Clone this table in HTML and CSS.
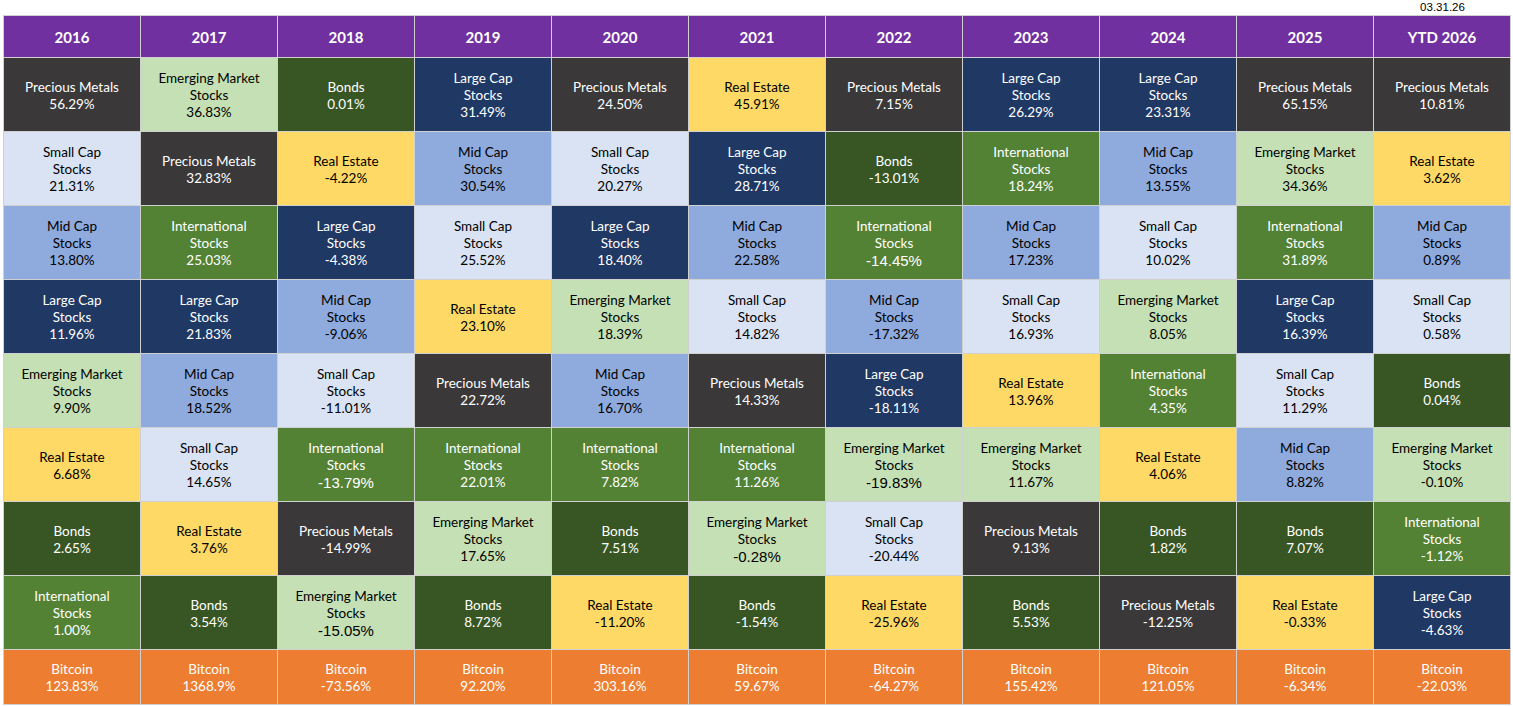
FILE: index.html
```html
<!DOCTYPE html>
<html lang="en">
<head>
<meta charset="utf-8">
<title>Asset Class Returns</title>
<link rel="stylesheet" href="styles.css">
</head>
<body>
<div class="page">
  <div class="date-row"><span class="date">03.31.26</span></div>
  <div class="grid">
    <div class="hd">2016</div><div class="hd">2017</div><div class="hd">2018</div><div class="hd">2019</div><div class="hd">2020</div><div class="hd">2021</div><div class="hd">2022</div><div class="hd">2023</div><div class="hd">2024</div><div class="hd">2025</div><div class="hd">YTD 2026</div>

    <div class="cell pm"><span>Precious Metals</span><span>56.29%</span></div>
    <div class="cell em"><span>Emerging Market<br>Stocks</span><span>36.83%</span></div>
    <div class="cell bd"><span>Bonds</span><span>0.01%</span></div>
    <div class="cell lc"><span>Large Cap<br>Stocks</span><span>31.49%</span></div>
    <div class="cell pm"><span>Precious Metals</span><span>24.50%</span></div>
    <div class="cell re"><span>Real Estate</span><span>45.91%</span></div>
    <div class="cell pm"><span>Precious Metals</span><span>7.15%</span></div>
    <div class="cell lc"><span>Large Cap<br>Stocks</span><span>26.29%</span></div>
    <div class="cell lc"><span>Large Cap<br>Stocks</span><span>23.31%</span></div>
    <div class="cell pm"><span>Precious Metals</span><span>65.15%</span></div>
    <div class="cell pm"><span>Precious Metals</span><span>10.81%</span></div>

    <div class="cell sc"><span>Small Cap<br>Stocks</span><span>21.31%</span></div>
    <div class="cell pm"><span>Precious Metals</span><span>32.83%</span></div>
    <div class="cell re"><span>Real Estate</span><span>-4.22%</span></div>
    <div class="cell mc"><span>Mid Cap<br>Stocks</span><span>30.54%</span></div>
    <div class="cell sc"><span>Small Cap<br>Stocks</span><span>20.27%</span></div>
    <div class="cell lc"><span>Large Cap<br>Stocks</span><span>28.71%</span></div>
    <div class="cell bd"><span>Bonds</span><span>-13.01%</span></div>
    <div class="cell in"><span>International<br>Stocks</span><span>18.24%</span></div>
    <div class="cell mc"><span>Mid Cap<br>Stocks</span><span>13.55%</span></div>
    <div class="cell em"><span>Emerging Market<br>Stocks</span><span>34.36%</span></div>
    <div class="cell re"><span>Real Estate</span><span>3.62%</span></div>

    <div class="cell mc"><span>Mid Cap<br>Stocks</span><span>13.80%</span></div>
    <div class="cell in"><span>International<br>Stocks</span><span>25.03%</span></div>
    <div class="cell lc"><span>Large Cap<br>Stocks</span><span>-4.38%</span></div>
    <div class="cell sc"><span>Small Cap<br>Stocks</span><span>25.52%</span></div>
    <div class="cell lc"><span>Large Cap<br>Stocks</span><span>18.40%</span></div>
    <div class="cell mc"><span>Mid Cap<br>Stocks</span><span>22.58%</span></div>
    <div class="cell in"><span>International<br>Stocks</span><span class="big">-14.45%</span></div>
    <div class="cell mc"><span>Mid Cap<br>Stocks</span><span>17.23%</span></div>
    <div class="cell sc"><span>Small Cap<br>Stocks</span><span>10.02%</span></div>
    <div class="cell in"><span>International<br>Stocks</span><span>31.89%</span></div>
    <div class="cell mc"><span>Mid Cap<br>Stocks</span><span>0.89%</span></div>

    <div class="cell lc"><span>Large Cap<br>Stocks</span><span>11.96%</span></div>
    <div class="cell lc"><span>Large Cap<br>Stocks</span><span>21.83%</span></div>
    <div class="cell mc"><span>Mid Cap<br>Stocks</span><span>-9.06%</span></div>
    <div class="cell re"><span>Real Estate</span><span>23.10%</span></div>
    <div class="cell em"><span>Emerging Market<br>Stocks</span><span>18.39%</span></div>
    <div class="cell sc"><span>Small Cap<br>Stocks</span><span>14.82%</span></div>
    <div class="cell mc"><span>Mid Cap<br>Stocks</span><span>-17.32%</span></div>
    <div class="cell sc"><span>Small Cap<br>Stocks</span><span>16.93%</span></div>
    <div class="cell em"><span>Emerging Market<br>Stocks</span><span>8.05%</span></div>
    <div class="cell lc"><span>Large Cap<br>Stocks</span><span>16.39%</span></div>
    <div class="cell sc"><span>Small Cap<br>Stocks</span><span>0.58%</span></div>

    <div class="cell em"><span>Emerging Market<br>Stocks</span><span>9.90%</span></div>
    <div class="cell mc"><span>Mid Cap<br>Stocks</span><span>18.52%</span></div>
    <div class="cell sc"><span>Small Cap<br>Stocks</span><span>-11.01%</span></div>
    <div class="cell pm"><span>Precious Metals</span><span>22.72%</span></div>
    <div class="cell mc"><span>Mid Cap<br>Stocks</span><span>16.70%</span></div>
    <div class="cell pm"><span>Precious Metals</span><span>14.33%</span></div>
    <div class="cell lc"><span>Large Cap<br>Stocks</span><span>-18.11%</span></div>
    <div class="cell re"><span>Real Estate</span><span>13.96%</span></div>
    <div class="cell in"><span>International<br>Stocks</span><span>4.35%</span></div>
    <div class="cell sc"><span>Small Cap<br>Stocks</span><span>11.29%</span></div>
    <div class="cell bd"><span>Bonds</span><span>0.04%</span></div>

    <div class="cell re"><span>Real Estate</span><span>6.68%</span></div>
    <div class="cell sc"><span>Small Cap<br>Stocks</span><span>14.65%</span></div>
    <div class="cell in"><span>International<br>Stocks</span><span class="big">-13.79%</span></div>
    <div class="cell in"><span>International<br>Stocks</span><span>22.01%</span></div>
    <div class="cell in"><span>International<br>Stocks</span><span>7.82%</span></div>
    <div class="cell in"><span>International<br>Stocks</span><span>11.26%</span></div>
    <div class="cell em"><span>Emerging Market<br>Stocks</span><span class="big">-19.83%</span></div>
    <div class="cell em"><span>Emerging Market<br>Stocks</span><span>11.67%</span></div>
    <div class="cell re"><span>Real Estate</span><span>4.06%</span></div>
    <div class="cell mc"><span>Mid Cap<br>Stocks</span><span>8.82%</span></div>
    <div class="cell em"><span>Emerging Market<br>Stocks</span><span>-0.10%</span></div>

    <div class="cell bd"><span>Bonds</span><span>2.65%</span></div>
    <div class="cell re"><span>Real Estate</span><span>3.76%</span></div>
    <div class="cell pm"><span>Precious Metals</span><span>-14.99%</span></div>
    <div class="cell em"><span>Emerging Market<br>Stocks</span><span>17.65%</span></div>
    <div class="cell bd"><span>Bonds</span><span>7.51%</span></div>
    <div class="cell em"><span>Emerging Market<br>Stocks</span><span class="big">-0.28%</span></div>
    <div class="cell sc"><span>Small Cap<br>Stocks</span><span>-20.44%</span></div>
    <div class="cell pm"><span>Precious Metals</span><span>9.13%</span></div>
    <div class="cell bd"><span>Bonds</span><span>1.82%</span></div>
    <div class="cell bd"><span>Bonds</span><span>7.07%</span></div>
    <div class="cell in"><span>International<br>Stocks</span><span>-1.12%</span></div>

    <div class="cell in"><span>International<br>Stocks</span><span>1.00%</span></div>
    <div class="cell bd"><span>Bonds</span><span>3.54%</span></div>
    <div class="cell em"><span>Emerging Market<br>Stocks</span><span class="big">-15.05%</span></div>
    <div class="cell bd"><span>Bonds</span><span>8.72%</span></div>
    <div class="cell re"><span>Real Estate</span><span>-11.20%</span></div>
    <div class="cell bd"><span>Bonds</span><span>-1.54%</span></div>
    <div class="cell re"><span>Real Estate</span><span>-25.96%</span></div>
    <div class="cell bd"><span>Bonds</span><span>5.53%</span></div>
    <div class="cell pm"><span>Precious Metals</span><span>-12.25%</span></div>
    <div class="cell re"><span>Real Estate</span><span>-0.33%</span></div>
    <div class="cell lc"><span>Large Cap<br>Stocks</span><span>-4.63%</span></div>

    <div class="cell bt"><span>Bitcoin</span><span>123.83%</span></div>
    <div class="cell bt"><span>Bitcoin</span><span>1368.9%</span></div>
    <div class="cell bt"><span>Bitcoin</span><span>-73.56%</span></div>
    <div class="cell bt"><span>Bitcoin</span><span>92.20%</span></div>
    <div class="cell bt"><span>Bitcoin</span><span>303.16%</span></div>
    <div class="cell bt"><span>Bitcoin</span><span>59.67%</span></div>
    <div class="cell bt"><span>Bitcoin</span><span>-64.27%</span></div>
    <div class="cell bt"><span>Bitcoin</span><span>155.42%</span></div>
    <div class="cell bt"><span>Bitcoin</span><span>121.05%</span></div>
    <div class="cell bt"><span>Bitcoin</span><span>-6.34%</span></div>
    <div class="cell bt"><span>Bitcoin</span><span>-22.03%</span></div>
  </div>
</div>
</body>
</html>
```
FILE: styles.css
```css
html, body {
  margin: 0;
  padding: 0;
  background: #ffffff;
}
.page {
  padding-left: 3px;
  font-family: Lato, "Open Sans", sans-serif;
}
.date-row {
  width: 1508px;
  height: 15px;
  display: flex;
  justify-content: flex-end;
}
.date {
  width: 137px;
  text-align: center;
  font-family: "Liberation Sans", Arial, sans-serif;
  font-size: 11.5px;
  line-height: 14px;
  color: #000;
}
.grid {
  display: grid;
  grid-template-columns: repeat(11, 136px);
  grid-template-rows: 41px repeat(8, 73px) 54px;
  gap: 1px;
  background: #d0d0d0;
  border: 1px solid #d0d0d0;
  width: max-content;
}
.hd {
  background: #7030a0;
  color: #fff;
  font-weight: 700;
  font-size: 15px;
  display: flex;
  align-items: center;
  justify-content: center;
}
.cell {
  display: flex;
  flex-direction: column;
  align-items: center;
  justify-content: center;
  text-align: center;
  font-size: 13.5px;
  line-height: 17px;
  padding-top: 2px;
  box-sizing: border-box;
}
.big {
  font-family: "Liberation Sans", Arial, sans-serif;
  font-size: 15px;
  line-height: 18px;
}
.pm { background: #3a3838; color: #fff; }
.em { background: #c5e0b4; color: #000; }
.bd { background: #375623; color: #fff; }
.lc { background: #203864; color: #fff; }
.sc { background: #dae3f3; color: #000; }
.mc { background: #8faadc; color: #000; }
.re { background: #ffd966; color: #000; }
.in { background: #548235; color: #fff; }
.bt { background: #ed7d31; color: #fff; }
```
